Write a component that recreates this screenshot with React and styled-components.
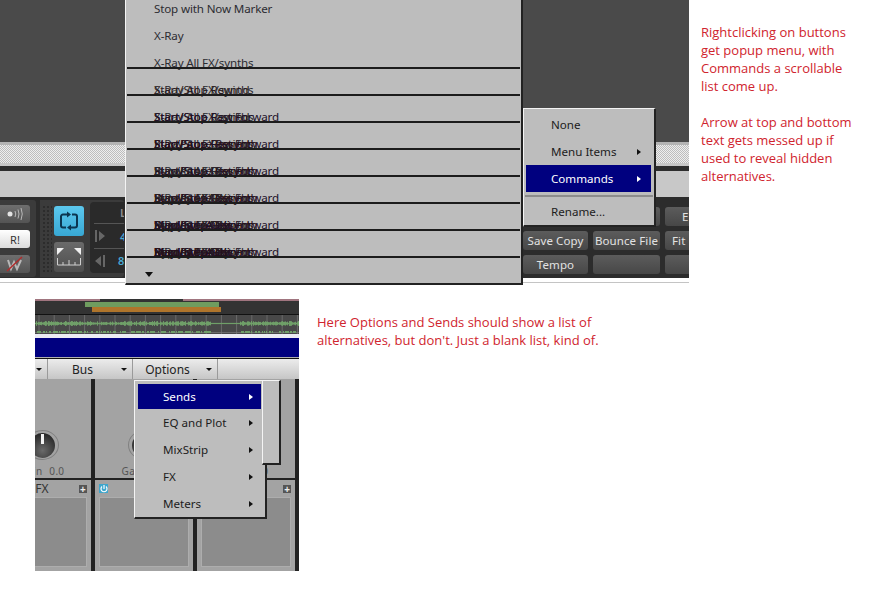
import React from "react";
import styled, { createGlobalStyle } from "styled-components";

const GlobalStyle = createGlobalStyle`
  html, body {
    margin: 0;
    padding: 0;
    background: #fff;
  }
  * {
    box-sizing: border-box;
  }
`;

const menuFont = `"Noto Sans", "Open Sans", sans-serif`;

const Page = styled.div`
  width: 893px;
  height: 600px;
  overflow: hidden;
  background: #fff;
  font-family: ${menuFont};
`;

const TopRow = styled.div`
  display: flex;
  height: 299px;
`;

const BottomRow = styled.div`
  display: flex;
  padding-left: 35px;
`;

const Note = styled.div`
  color: #d0242e;
  font-family: "Open Sans", sans-serif;
  font-size: 13px;
  line-height: 18px;
  white-space: pre-line;
  padding-left: ${(props) => props.left}px;
  padding-top: ${(props) => props.top}px;
`;

const Shot = styled.div`
  position: relative;
  flex: none;
  overflow: hidden;
  width: ${(props) => props.w}px;
  height: ${(props) => props.h}px;
`;

/* top screenshot: background bands */
const DarkBand = styled.div`
  height: 142px;
  background: #4a4a4a;
`;

const LightEdge = styled.div`
  height: 3px;
  background: #b4b4b4;
`;

const Dither = styled.div`
  height: 18px;
  background-color: #d8d8d8;
  background-image: repeating-conic-gradient(#bdbdbd 0 25%, #eeeeee 0 50%);
  background-size: 2px 2px;
`;

const PaleBand = styled.div`
  height: ${(props) => props.h}px;
  background: #c8c8c8;
`;

const BlackBand = styled.div`
  height: 5px;
  background: #2e2e2e;
`;

const Transport = styled.div`
  display: flex;
  height: 81px;
  padding-top: 3px;
  padding-bottom: 1px;
  background: #2c2c2c;
`;

const Group = styled.div`
  display: flex;
  flex: none;
  overflow: hidden;
  width: ${(props) => props.w}px;
  margin-right: ${(props) => props.mr || 0}px;
  padding: 5px 0 0 ${(props) => props.pl || 0}px;
  background: #3b3b3b;
  border-radius: 0 3px 3px 0;
`;

const SideButtons = styled.div`
  display: flex;
  flex-direction: column;
  gap: 7px;
  width: 30px;
`;

const SideButton = styled.div`
  display: flex;
  align-items: center;
  justify-content: center;
  height: 18px;
  border-radius: 0 3px 3px 0;
  color: ${(props) => (props.lit ? "#333" : "#cfcfcf")};
  font-size: 11px;
  background: ${(props) =>
    props.lit
      ? "linear-gradient(#ffffff, #dcdcdc)"
      : "linear-gradient(#6e6e6e, #545454)"};
`;

const Grip = styled.div`
  flex: none;
  width: 10px;
  height: 68px;
  background-image: radial-gradient(#2c2c2c 1px, transparent 1.2px);
  background-size: 4px 4px;
`;

const LoopColumn = styled.div`
  display: flex;
  flex: none;
  flex-direction: column;
  gap: 6px;
  width: 30px;
  margin: 1px 0 0 2px;
`;

const LoopButton = styled.div`
  display: flex;
  align-items: center;
  justify-content: center;
  height: 30px;
  border-radius: 3px;
  background: ${(props) =>
    props.on
      ? "linear-gradient(#5cc8ee, #38a8d4)"
      : "linear-gradient(#6a6a6a, #4e4e4e)"};
`;

const Readout = styled.div`
  flex: none;
  width: 100px;
  height: 71px;
  margin: -3px 0 0 6px;
  padding: 0 4px;
  background: #2a2a2a;
  border-radius: 4px;
  color: #8f8f8f;
  font-size: 11px;
`;

const ReadoutRow = styled.div`
  display: flex;
  align-items: center;
  height: ${(props) => props.h}px;
  border-top: ${(props) => (props.line ? "1px solid #555" : "none")};
  color: ${(props) => props.color || "#8f8f8f"};
  font-weight: 600;
  padding-left: ${(props) => props.pl}px;
  gap: ${(props) => props.gap || 0}px;
`;

const ActionGrid = styled.div`
  display: grid;
  flex: none;
  grid-template-columns: 65px 67px 70px;
  grid-auto-rows: 19px;
  gap: 5px;
  margin-left: 399px;
  margin-top: 7px;
`;

const ActionButton = styled.div`
  display: flex;
  align-items: center;
  justify-content: ${(props) => (props.pl ? "flex-start" : "center")};
  padding-left: ${(props) => props.pl || 0}px;
  border-radius: 3px;
  background: linear-gradient(#5c5c5c, #474747);
  color: #e2e2e2;
  font-size: 11.5px;
  letter-spacing: 0.1px;
  white-space: nowrap;
`;

const BottomEdge = styled.div`
  height: 5px;
  background: #fff;
  border-bottom: 1px solid #c4c4c4;
`;

/* popup menus */
const Menu = styled.div`
  position: absolute;
  left: ${(props) => props.x}px;
  top: ${(props) => props.y}px;
  width: ${(props) => props.w}px;
  height: ${(props) => props.h}px;
  padding-top: ${(props) => props.pt || 0}px;
  background: #bdbdbd;
  border-top: 1px solid #f4f4f4;
  border-left: 1px solid #f4f4f4;
  border-right: 2px solid #222;
  border-bottom: 2px solid #222;
  color: #1c1c1c;
  font-size: 11.6px;
`;

const ScrollRow = styled.div`
  position: relative;
  height: 27px;
  line-height: 26px;
  padding-left: 28px;
  letter-spacing: -0.15px;
  white-space: nowrap;
  color: #2c2c32;
  &::after {
    content: "";
    display: ${(props) => (props.ruled ? "block" : "none")};
    position: absolute;
    left: 1px;
    right: 1px;
    top: 17px;
    height: 2px;
    background: #1c1c1c;
  }
`;

const Ghost = styled.span`
  position: absolute;
  left: 28px;
  top: 0;
  color: ${(props) => props.color};
`;

const ArrowRow = styled.div`
  padding: 6px 0 0 19px;
`;

const Triangle = styled.span`
  display: block;
  flex: none;
  width: 0;
  height: 0;
  border-style: solid;
  border-color: transparent;
  border-width: ${(props) =>
    props.right
      ? "3.5px 0 3.5px 4px"
      : props.small
        ? "3px 3px 0"
        : "5px 4.5px 0"};
  ${(props) => (props.right ? "border-left" : "border-top")}-color: ${(props) =>
    props.color || "#111"};
`;

const MenuItem = styled.div`
  display: flex;
  align-items: center;
  justify-content: space-between;
  height: ${(props) => props.h || 27}px;
  margin: 0 ${(props) => props.mr || 3}px 0 ${(props) => props.ml || 2}px;
  padding: 0 ${(props) => props.pr || 10}px 0 25px;
  background: ${(props) => (props.active ? "#00007f" : "transparent")};
  color: ${(props) => (props.active ? "#fff" : "#1c1c1c")};
`;

const Separator = styled.div`
  height: 2px;
  margin: 3px 1px 2px;
  background: #8c8c8c;
`;

/* bottom screenshot */
const Ribbon = styled.div`
  height: 2px;
  background: linear-gradient(
    to right,
    #a0757f 0 65px,
    #333 65px 148px,
    #a0757f 148px
  );
`;

const ClipLane = styled.div`
  height: 14px;
  padding-top: 1px;
  background: #333;
  border-bottom: 1px solid #111;
`;

const Clip = styled.div`
  height: 5px;
  margin-left: ${(props) => props.left}px;
  width: ${(props) => props.w}px;
  background: ${(props) => props.color};
`;

const Wave = styled.svg`
  display: block;
  width: 264px;
  height: 19px;
`;

const WhiteLine = styled.div`
  height: 4px;
  background: #ececf4;
`;

const NavyBar = styled.div`
  height: 19px;
  background: #00007f;
`;

const GreyLine = styled.div`
  height: 2px;
  background: #b0b0b0;
  border-bottom: 1px solid #111;
`;

const TabBar = styled.div`
  display: flex;
  height: 20px;
  background: linear-gradient(#ececec, #c6c6c6);
  font-size: 12px;
  color: #222;
`;

const Tab = styled.div`
  display: flex;
  align-items: center;
  justify-content: flex-end;
  width: ${(props) => props.w}px;
  padding-right: 5px;
  border-right: 1px solid #9a9a9a;
`;

const TabLabel = styled.span`
  flex: 1;
  text-align: center;
  padding-right: 4px;
`;

const Strips = styled.div`
  display: flex;
  height: 192px;
`;

const Strip = styled.div`
  display: flex;
  flex: none;
  justify-content: flex-end;
  overflow: hidden;
  width: ${(props) => props.w}px;
`;

const StripInner = styled.div`
  flex: none;
  width: 102px;
  background: #a3a3a3;
  border-right: 4px solid #222;
`;

const KnobArea = styled.div`
  display: flex;
  flex-direction: column;
  align-items: center;
  height: 101px;
  padding-top: 51px;
  color: #555;
  font-size: 10px;
  letter-spacing: 0.3px;
  word-spacing: 4px;
  white-space: nowrap;
  border-bottom: 2px solid #222;
`;

const KnobRing = styled.div`
  display: flex;
  align-items: center;
  justify-content: center;
  width: 33px;
  height: 33px;
  margin-bottom: 4px;
  border-radius: 50%;
  border: 1px solid #808080;
`;

const KnobCap = styled.div`
  position: relative;
  width: 25px;
  height: 25px;
  border-radius: 50%;
  background: radial-gradient(circle at 50% 70%, #6a6a6a, #2a2a2a 75%);
  &::after {
    content: "";
    position: absolute;
    left: 11px;
    top: 1px;
    width: 3px;
    height: 10px;
    background: #f2f2f2;
  }
`;

const FxHeader = styled.div`
  display: flex;
  align-items: center;
  justify-content: space-between;
  height: 17px;
  padding: 0 4px;
  color: #333;
  font-size: 12px;
`;

const HeaderSlot = styled.div`
  width: 8px;
`;

const PlusBox = styled.div`
  display: flex;
  align-items: center;
  justify-content: center;
  width: 8px;
  height: 8px;
  background: #555;
  color: #eee;
  font-size: 10px;
  font-weight: 700;
  line-height: 8px;
`;

const PowerBox = styled.div`
  display: flex;
  align-items: center;
  justify-content: center;
  width: 9px;
  height: 9px;
  background: #3ea6cc;
`;

const FxBox = styled.div`
  height: 70px;
  margin: 0 4px;
  background: #8c8c8c;
  border: 1px solid #adadad;
`;

const STACK = [
  "X-Ray All FX/synths",
  "Start/Stop Rewind",
  "Start/Stop Fast Forward",
  "Play/Pause Resynth",
  "Bypass All FX",
  "Display FX/DXi",
  "Mixdown Audio",
  "Record Punch",
];

const GHOST_COLORS = ["#2a2a30", "#2a1a20", "#201028", "#28101a"];

const scrollRows = [
  { label: "Stop with Now Marker", depth: 0 },
  { label: "X-Ray", depth: 0 },
  { label: "X-Ray All FX/synths", depth: 0, ruled: true },
  { depth: 2, ruled: true },
  { depth: 3, ruled: true },
  { depth: 4, ruled: true },
  { depth: 5, ruled: true },
  { depth: 6, ruled: true },
  { depth: 7, ruled: true },
  { depth: 8, ruled: true },
];

const sendItems = ["EQ and Plot", "MixStrip", "FX", "Meters"];

const LoopIcon = () => (
  <svg width="20" height="20" viewBox="0 0 20 20" fill="none">
    <path
      d="M8 3.500H4a2 2 0 0 0-2 2v9a2 2 0 0 0 2 2h3M12 16.500h4a2 2 0 0 0 2-2v-9a2 2 0 0 0-2-2h-3"
      stroke="#0b3550"
      strokeWidth="2"
    />
    <path d="M8 0.500l4 3-4 3zM12 13.500l-4 3 4 3z" fill="#0b3550" />
  </svg>
);

const RulerIcon = () => (
  <svg width="24" height="20" viewBox="0 0 24 20" fill="none">
    <path d="M0 1h7L0 8zM24 1h-7l7 7z" fill="#f0f0f0" />
    <path
      d="M.5 11v7h23v-7M6 15v3M12 13v5M18 15v3"
      stroke="#cfcfcf"
      strokeWidth="1"
    />
  </svg>
);

const SpeakerIcon = () => (
  <svg width="18" height="14" viewBox="0 0 18 14" fill="none">
    <circle cx="4" cy="7" r="2.500" fill="#e4e4e4" />
    <path
      d="M9 4q1.500 3 0 6M12 2.500q2 4.500 0 9M15 1q2.500 6 0 12"
      stroke="#b8b8b8"
      strokeWidth="1"
    />
  </svg>
);

const StruckW = () => (
  <svg width="20" height="16" viewBox="0 0 20 16" fill="none">
    <path d="M3 4l3 9 3-7 3 7 4-9" stroke="#b8b8b8" strokeWidth="2" />
    <path d="M2 15L17 1" stroke="#b02c2c" strokeWidth="1.500" />
  </svg>
);

const JumpIcon = ({ flip }) => (
  <svg width="12" height="12" viewBox="0 0 12 12" fill="#666">
    {flip ? (
      <path d="M0 6l6-5v10zM8 0h2v12H8z" />
    ) : (
      <path d="M0 0h2v12H0zM4 1l6 5-6 5z" />
    )}
  </svg>
);

const PowerIcon = () => (
  <svg width="8" height="8" viewBox="0 0 8 8" fill="none">
    <path d="M2 1.500a3 3 0 1 0 4 0M4 0v4" stroke="#fff" strokeWidth="1.200" />
  </svg>
);

const noise = (x) => {
  const n = Math.sin(x * 12.9898) * 43758.5453;
  return n - Math.floor(n);
};

const WaveDrawing = () => {
  const grid = [];
  for (let x = 4; x < 264; x += 15.2) grid.push(x);
  const bars = [];
  const low = [];
  for (let x = 0; x < 264; x += 1) {
    const quiet = x > 175 && x < 205;
    const a = quiet ? 0.6 : 0.7 + noise(x) * 1.8;
    bars.push(`M${x + 0.5} ${8.5 - a}V${8.5 + a}`);
    if (!quiet && noise(x + 300) > 0.45) low.push(`M${x + 0.5} 16V18`);
  }
  return (
    <Wave viewBox="0 0 264 19">
      <rect width="264" height="19" fill="#484848" />
      <path d="M0 8.500H264M0 17.500H264" stroke="#6a6a6a" strokeWidth="1" />
      {grid.map((x) => (
        <path key={x} d={`M${x} 0V19`} stroke="#7a7a7a" strokeWidth="0.7" />
      ))}
      <path d={bars.join("")} stroke="#6f9f68" strokeWidth="1" />
      <path d={low.join("")} stroke="#6f9f68" strokeWidth="1" />
    </Wave>
  );
};

const FxStrip = ({ width, left, right, label, gain }) => (
  <Strip w={width}>
    <StripInner>
      <KnobArea>
        <KnobRing>
          <KnobCap />
        </KnobRing>
        {gain}
      </KnobArea>
      <FxHeader>
        {left ? (
          <PowerBox>
            <PowerIcon />
          </PowerBox>
        ) : (
          <HeaderSlot />
        )}
        {label}
        {right ? <PlusBox>+</PlusBox> : <HeaderSlot />}
      </FxHeader>
      <FxBox />
    </StripInner>
  </Strip>
);

export default function App() {
  return (
    <Page>
      <GlobalStyle />
      <TopRow>
        <Shot w={689} h={285}>
          <DarkBand />
          <LightEdge />
          <Dither />
          <PaleBand h={3} />
          <BlackBand />
          <PaleBand h={26} />
          <Transport>
            <Group w={36} mr={4}>
              <SideButtons>
                <SideButton>
                  <SpeakerIcon />
                </SideButton>
                <SideButton lit>R!</SideButton>
                <SideButton>
                  <StruckW />
                </SideButton>
              </SideButtons>
            </Group>
            <Group w={84} pl={2}>
              <Grip />
              <LoopColumn>
                <LoopButton on>
                  <LoopIcon />
                </LoopButton>
                <LoopButton>
                  <RulerIcon />
                </LoopButton>
              </LoopColumn>
              <Readout>
                <ReadoutRow h={21} pl={26}>
                  L
                </ReadoutRow>
                <ReadoutRow h={25} line pl={1} gap={13} color="#49a9d6">
                  <JumpIcon />4
                </ReadoutRow>
                <ReadoutRow h={24} line pl={1} gap={11} color="#49a9d6">
                  <JumpIcon flip />8
                </ReadoutRow>
              </Readout>
            </Group>
            <ActionGrid>
              <ActionButton />
              <ActionButton />
              <ActionButton pl={17}>E</ActionButton>
              <ActionButton>Save Copy</ActionButton>
              <ActionButton>Bounce File</ActionButton>
              <ActionButton pl={7}>Fit</ActionButton>
              <ActionButton>Tempo</ActionButton>
              <ActionButton />
              <ActionButton />
            </ActionGrid>
          </Transport>
          <BottomEdge />
          <Menu x={125} y={-5} w={398} h={290}>
            {scrollRows.map((row, index) => (
              <ScrollRow key={index} ruled={row.ruled}>
                {row.label}
                {STACK.slice(0, row.depth).map((text, layer) => (
                  <Ghost key={text} color={GHOST_COLORS[layer % 4]}>
                    {text}
                  </Ghost>
                ))}
              </ScrollRow>
            ))}
            <ArrowRow>
              <Triangle />
            </ArrowRow>
          </Menu>
          <Menu x={523} y={108} w={133} h={119} pt={2}>
            <MenuItem>None</MenuItem>
            <MenuItem>
              Menu Items
              <Triangle right />
            </MenuItem>
            <MenuItem active>
              Commands
              <Triangle right color="#fff" />
            </MenuItem>
            <Separator />
            <MenuItem h={24}>Rename...</MenuItem>
          </Menu>
        </Shot>
        <Note left={12} top={23}>
          {`Rightclicking on buttons
get popup menu, with
Commands a scrollable
list come up.

Arrow at top and bottom
text gets messed up if
used to reveal hidden
alternatives.`}
        </Note>
      </TopRow>
      <BottomRow>
        <Shot w={264} h={273}>
          <Ribbon />
          <ClipLane>
            <Clip left={50} w={134} color="#6f9c5f" />
            <Clip left={57} w={129} color="#b0752b" />
          </ClipLane>
          <WaveDrawing />
          <WhiteLine />
          <NavyBar />
          <GreyLine />
          <TabBar>
            <Tab w={13}>
              <Triangle small />
            </Tab>
            <Tab w={85}>
              <TabLabel>Bus</TabLabel>
              <Triangle small />
            </Tab>
            <Tab w={85}>
              <TabLabel>Options</TabLabel>
              <Triangle small />
            </Tab>
          </TabBar>
          <Strips>
            <FxStrip width={60} right label="FX" gain="Gain 0.0" />
            <FxStrip width={102} left gain="Gain 0.0" />
            <FxStrip width={102} right gain="Gain 0.0" />
          </Strips>
          <Menu x={99} y={81} w={133} h={139} pt={3}>
            <MenuItem active h={25} ml={3} mr={4} pr={8}>
              Sends
              <Triangle right color="#fff" />
            </MenuItem>
            {sendItems.map((item) => (
              <MenuItem key={item} ml={3} mr={4} pr={8}>
                {item}
                <Triangle right />
              </MenuItem>
            ))}
          </Menu>
          <Menu x={227} y={81} w={19} h={85} />
        </Shot>
        <Note left={18} top={14}>
          {`Here Options and Sends should show a list of
alternatives, but don't. Just a blank list, kind of.`}
        </Note>
      </BottomRow>
    </Page>
  );
}
